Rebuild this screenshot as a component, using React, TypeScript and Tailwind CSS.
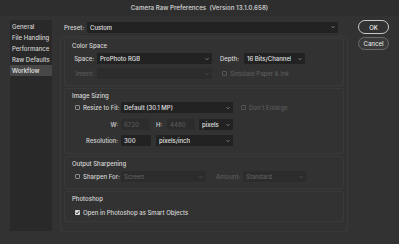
import { ReactNode } from "react";

function Chevron({ dim }: { dim?: boolean }) {
  return (
    <svg
      className={`w-[4px] h-[4px] shrink-0 ${dim ? "text-[#5a5a5a]" : "text-[#9a9a9a]"}`}
      viewBox="0 0 8 8"
      fill="none"
      stroke="currentColor"
      strokeWidth={1.5}
    >
      <path d="M1 2.5l3 3 3-3" />
    </svg>
  );
}

function Select({
  value,
  width,
  disabled,
}: {
  value: string;
  width: string;
  disabled?: boolean;
}) {
  return (
    <div
      className={`${width} h-[11px] flex items-center justify-between pl-[3px] pr-[3px] rounded-[1px] ${
        disabled ? "bg-[#2c2c2c] text-[#5f5f5f]" : "bg-[#222222] text-[#e0e0e0]"
      }`}
    >
      <span className="truncate">{value}</span>
      <Chevron dim={disabled} />
    </div>
  );
}

function Input({ value, width, disabled }: { value: string; width: string; disabled?: boolean }) {
  return (
    <div
      className={`${width} h-[11px] flex items-center pl-[3px] rounded-[1px] ${
        disabled ? "bg-[#2c2c2c] text-[#5a5a5a]" : "bg-[#222222] text-[#e0e0e0]"
      }`}
    >
      {value}
    </div>
  );
}

function Check({ checked, dim }: { checked?: boolean; dim?: boolean }) {
  if (checked) {
    return (
      <div className="w-[5px] h-[5px] rounded-[1px] bg-[#d8d8d8] flex items-center justify-center shrink-0">
        <svg className="w-[5px] h-[5px]" viewBox="0 0 8 8" fill="none" stroke="#2a2a2a" strokeWidth={1.6}>
          <path d="M1.5 4.2l1.8 1.8 3.2-4" />
        </svg>
      </div>
    );
  }
  return (
    <div
      className={`w-[5px] h-[5px] rounded-[1px] border shrink-0 ${
        dim ? "border-[#555]" : "border-[#8a8a8a]"
      }`}
    />
  );
}

function Section({ title, height, children }: { title: string; height: string; children: ReactNode }) {
  return (
    <div className={`${height} border border-[#393939] rounded-[2px] pl-[7px] pt-[2px]`}>
      <div className="h-[9px] flex items-center text-[#dadada]">{title}</div>
      {children}
    </div>
  );
}

const sidebar = ["General", "File Handling", "Performance", "Raw Defaults", "Workflow"];

export default function App() {
  return (
    <div
      className="w-[399px] h-[244px] bg-[#323232] text-[6px] font-medium text-[#d6d6d6] overflow-hidden"
      style={{ fontFamily: "Inter, 'Noto Sans', sans-serif" }}
    >
      <div className="h-[16px] bg-[#2e2e2e] flex items-center justify-center font-semibold text-[#c4c4c4] text-[6.2px]">
        Camera Raw Preferences&nbsp; (Version 13.1.0.658)
      </div>

      <div className="flex pt-[4px]">
        <div className="ml-[10px] w-[42px] h-[211px] bg-[#292929] pt-[1px]">
          {sidebar.map((s) => (
            <div
              key={s}
              className={`h-[11px] flex items-center pl-[2px] ${
                s === "Workflow" ? "bg-[#474747] text-[#e8e8e8]" : "text-[#d4d4d4]"
              }`}
            >
              {s}
            </div>
          ))}
        </div>

        <div className="ml-[8px] w-[288px] flex flex-col">
          <div className="h-[13px] flex items-center pt-[1px]">
            <span className="ml-[4px] w-[23px]">Preset:</span>
            <Select value="Custom" width="w-[251px]" />
          </div>

          <div className="mt-[3px] h-[196px] border border-[#393939] rounded-[2px] px-[3px] pt-[1px] flex flex-col gap-[2px]">
            <Section title="Color Space" height="h-[48px]">
              <div className="flex items-center mt-[3px] h-[11px]">
                <span className="w-[25px] text-right pr-[3px]">Space:</span>
                <Select value="ProPhoto RGB" width="w-[115px]" />
                <span className="ml-[8px] w-[24px]">Depth:</span>
                <Select value="16 Bits/Channel" width="w-[61px]" />
              </div>
              <div className="flex items-center mt-[4px] h-[11px] text-[#5c5c5c]">
                <span className="w-[25px] text-right pr-[3px]">Intent:</span>
                <Select value="" width="w-[115px]" disabled />
                <span className="ml-[10px] flex items-center gap-[3px]">
                  <Check dim />
                  Simulate Paper &amp; Ink
                </span>
              </div>
            </Section>

            <Section title="Image Sizing" height="h-[66px]">
              <div className="flex items-center mt-[2px] h-[11px]">
                <span className="ml-[3px] flex items-center gap-[3px] w-[46px]">
                  <Check />
                  Resize to Fit:
                </span>
                <Select value="Default  (30.1 MP)" width="w-[112px]" />
                <span className="ml-[8px] flex items-center gap-[3px] text-[#5c5c5c]">
                  <Check dim />
                  Don't Enlarge
                </span>
              </div>
              <div className="flex items-center mt-[6px] h-[11px]">
                <span className="w-[49px] text-right pr-[3px]">W:</span>
                <Input value="6720" width="w-[28px]" disabled />
                <span className="ml-[7px] w-[11px]">H:</span>
                <Input value="4480" width="w-[28px]" disabled />
                <div className="ml-[4px]">
                  <Select value="pixels" width="w-[34px]" />
                </div>
              </div>
              <div className="flex items-center mt-[5px] h-[11px]">
                <span className="w-[49px] text-right pr-[3px]">Resolution:</span>
                <Input value="300" width="w-[30px]" />
                <div className="ml-[5px]">
                  <Select value="pixels/inch" width="w-[77px]" />
                </div>
              </div>
            </Section>

            <Section title="Output Sharpening" height="h-[33px]">
              <div className="flex items-center mt-[3px] h-[11px]">
                <span className="ml-[3px] flex items-center gap-[3px] w-[46px]">
                  <Check />
                  Sharpen For:
                </span>
                <Select value="Screen" width="w-[85px]" disabled />
                <span className="ml-[10px] w-[27px] text-[#5c5c5c]">Amount:</span>
                <Select value="Standard" width="w-[63px]" disabled />
              </div>
            </Section>

            <Section title="Photoshop" height="h-[31px]">
              <div className="flex items-center mt-[4px] h-[11px]">
                <span className="ml-[3px] flex items-center gap-[3px]">
                  <Check checked />
                  Open in Photoshop as Smart Objects
                </span>
              </div>
            </Section>
          </div>
        </div>

        <div className="ml-[10px] w-[31px] flex flex-col gap-[3px]">
          <div className="h-[14px] rounded-full border border-[#c8c8c8] flex items-center justify-center text-[#eeeeee]">
            OK
          </div>
          <div className="h-[13px] rounded-full border border-[#6a6a6a] bg-[#3a3a3a] flex items-center justify-center text-[#e0e0e0]">
            Cancel
          </div>
        </div>
      </div>
    </div>
  );
}
